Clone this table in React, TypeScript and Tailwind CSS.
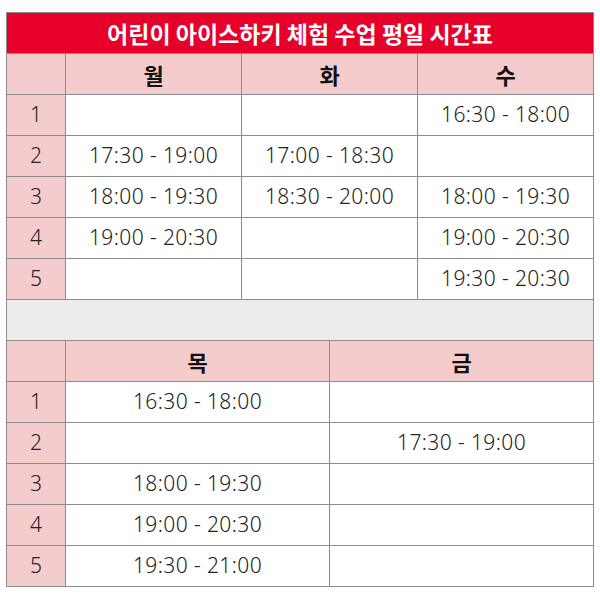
const top = [
  ["1", "", "", "16:30 - 18:00"],
  ["2", "17:30 - 19:00", "17:00 - 18:30", ""],
  ["3", "18:00 - 19:30", "18:30 - 20:00", "18:00 - 19:30"],
  ["4", "19:00 - 20:30", "", "19:00 - 20:30"],
  ["5", "", "", "19:30 - 20:30"],
];

const bottom = [
  ["1", "16:30 - 18:00", ""],
  ["2", "", "17:30 - 19:00"],
  ["3", "18:00 - 19:30", ""],
  ["4", "19:00 - 20:30", ""],
  ["5", "19:30 - 21:00", ""],
];

const cell = "border border-[#8c8c8c] p-0 text-center align-middle";
const num = `${cell} bg-[#f4cccc] text-[21px] font-light text-[#222] font-['Noto_Sans',sans-serif]`;
const time = `${cell} bg-white text-[21px] tracking-[0.4px] font-light text-[#222] font-['Noto_Sans',sans-serif]`;
const head = `${cell} bg-[#f4cccc] text-[22px] font-bold text-[#111]`;

export default function App() {
  return (
    <div className="w-[600px] h-[600px] bg-white pt-[12px] pl-[6px]" style={{ fontFamily: '"Noto Sans CJK KR", "Noto Sans", sans-serif' }}>
      <table className="table-fixed border-collapse w-[587px]">
        <colgroup>
          <col className="w-[59px]" />
          <col className="w-[176px]" />
          <col className="w-[88px]" />
          <col className="w-[88px]" />
          <col className="w-[176px]" />
        </colgroup>
        <tbody>
          <tr className="h-[41px]">
            <td colSpan={5} className={`${cell} bg-[#e6002a] text-white text-[23px] font-bold`}>
              어린이 아이스하키 체험 수업 평일 시간표
            </td>
          </tr>
          <tr className="h-[41px]">
            <td className={head}></td>
            <td className={head}>월</td>
            <td colSpan={2} className={head}>화</td>
            <td className={head}>수</td>
          </tr>
          {top.map((r) => (
            <tr key={"t" + r[0]} className="h-[41px]">
              <td className={num}>{r[0]}</td>
              <td className={time}>{r[1]}</td>
              <td colSpan={2} className={time}>{r[2]}</td>
              <td className={time}>{r[3]}</td>
            </tr>
          ))}
          <tr className="h-[41px]">
            <td colSpan={5} className={`${cell} bg-[#ececec]`}></td>
          </tr>
          <tr className="h-[41px]">
            <td className={head}></td>
            <td colSpan={2} className={head}>목</td>
            <td colSpan={2} className={head}>금</td>
          </tr>
          {bottom.map((r) => (
            <tr key={"b" + r[0]} className="h-[41px]">
              <td className={num}>{r[0]}</td>
              <td colSpan={2} className={time}>{r[1]}</td>
              <td colSpan={2} className={time}>{r[2]}</td>
            </tr>
          ))}
        </tbody>
      </table>
    </div>
  );
}
